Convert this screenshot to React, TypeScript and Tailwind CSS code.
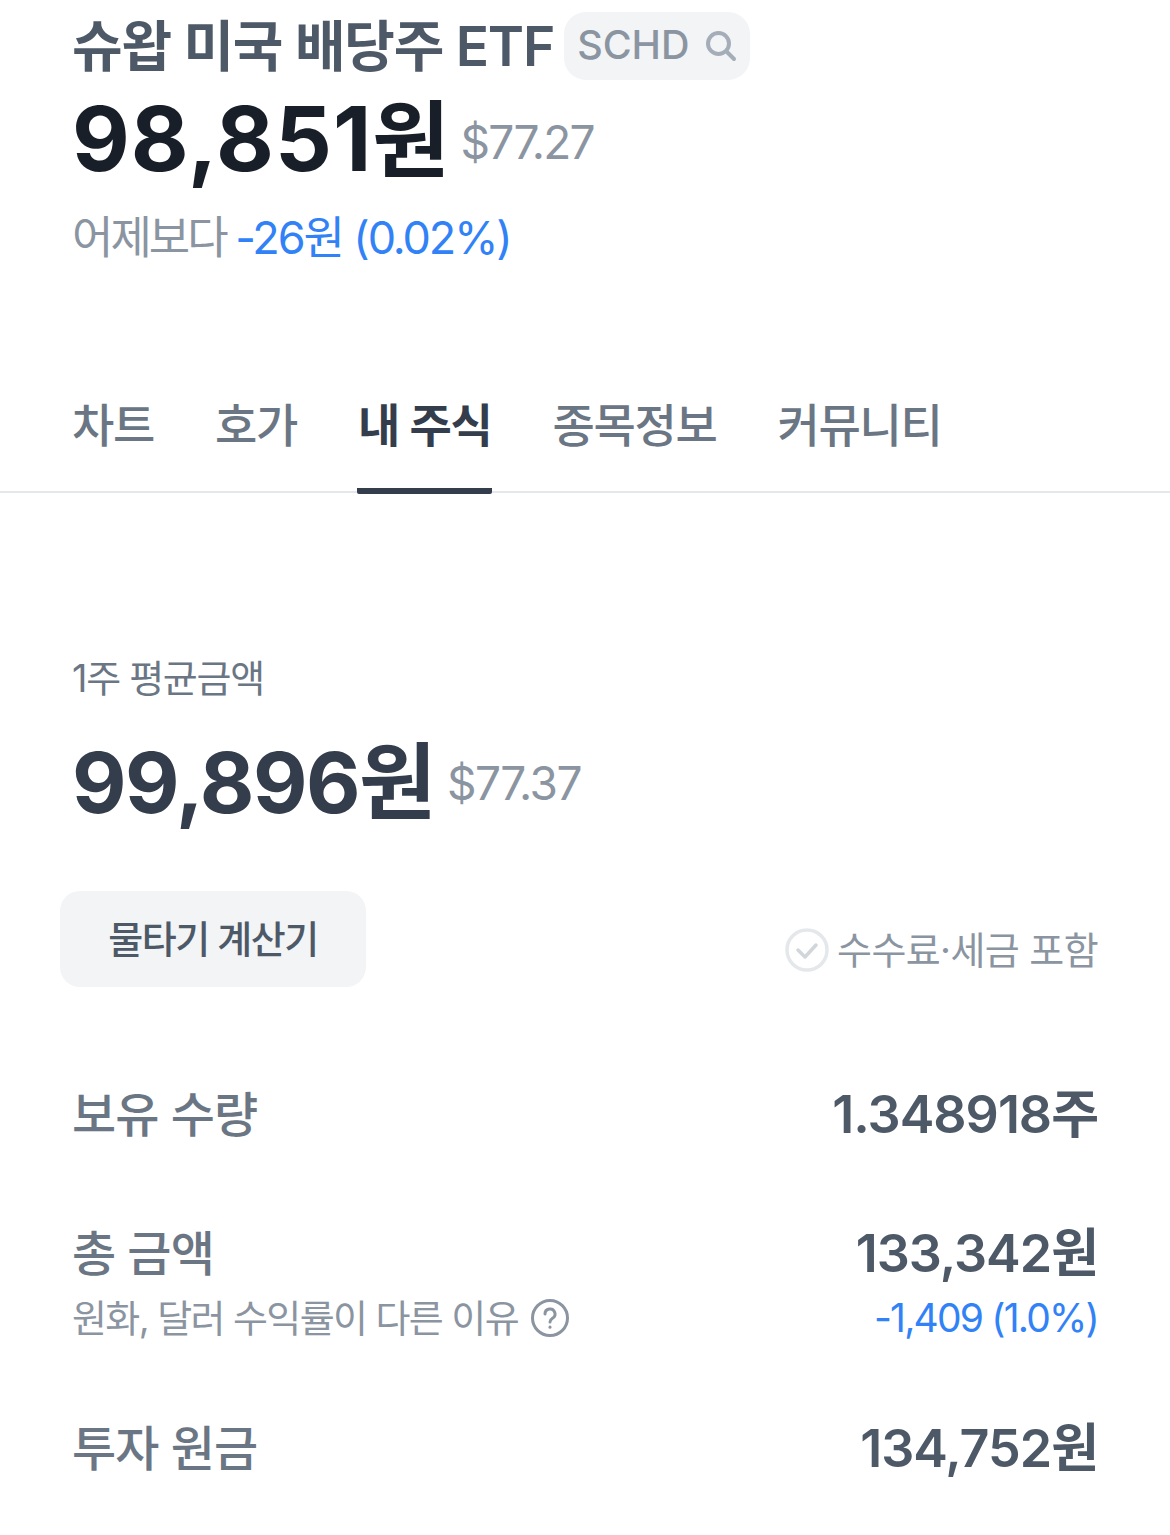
const font = "font-['Inter','Noto_Sans_CJK_KR',sans-serif]"

function Row({ label, value }: { label: string; value: string }) {
  return (
    <div className="flex items-center justify-between">
      <span className="text-[48px] leading-[60px] font-medium text-[#6b7684] tracking-[-0.8px]">{label}</span>
      <span className="text-[52px] leading-[60px] font-semibold text-[#4e5968] tracking-[-1px]">{value}</span>
    </div>
  )
}

export default function App() {
  return (
    <div className={`${font} w-[1170px] h-[1535px] bg-white overflow-hidden`}>
      {/* Header */}
      <div className="px-[72px] pt-[12px]">
        <div className="flex items-center gap-[10px] h-[68px]">
          <h1 className="text-[55px] font-semibold text-[#4e5968] tracking-[-1.2px] leading-[68px] whitespace-nowrap">슈왑 미국 배당주 ETF</h1>
          <div className="flex items-center gap-[13px] h-[68px] pl-[13px] pr-[11px] rounded-[22px] bg-[#f2f4f6]">
            <span className="text-[39.5px] font-medium text-[#8b95a1] leading-none">SCHD</span>
            <svg width="36" height="36" viewBox="0 0 36 36" fill="none" stroke="#a5aeb8" strokeWidth="4" strokeLinecap="round">
              <circle cx="15.5" cy="15.5" r="10.5" />
              <path d="M24 24l7 7" />
            </svg>
          </div>
        </div>
        <div className="flex items-center gap-[10px] mt-[8px] h-[104px]">
          <span className="text-[89px] leading-[104px] font-bold text-[#191f28] tracking-[1px]">98,851<span className="text-[84px]">원</span></span>
          <span className="pt-[4px] text-[46px] text-[#8b95a1] tracking-[-1.8px] leading-none">$77.27</span>
        </div>
        <p className="mt-[16px] text-[45px] leading-[60px] text-[#8b95a1] tracking-[-3px]">
          어제보다 <span className="text-[#3182f6] tracking-[-2.1px]">-26원 (0.02%)</span>
        </p>
      </div>

      {/* Tabs */}
      <div className="flex gap-[61px] mt-[128px] px-[72px] h-[97px] border-b-2 border-[#e5e8eb]">
        <span className="text-[46px] leading-[58px] font-medium text-[#6b7684] tracking-[-1.3px]">차트</span>
        <span className="text-[46px] leading-[58px] font-medium text-[#6b7684] tracking-[-1.3px]">호가</span>
        <span className="h-[98px] -mx-[1px] px-[1px] border-b-[6px] border-[#333d4b] rounded-b-[2px] text-[46px] leading-[58px] font-semibold text-[#333d4b] tracking-[-1.3px]">내 주식</span>
        <span className="text-[46px] leading-[58px] font-medium text-[#6b7684] tracking-[-1.3px]">종목정보</span>
        <span className="text-[46px] leading-[58px] font-medium text-[#6b7684] tracking-[-1.3px]">커뮤니티</span>
      </div>

      {/* Average price */}
      <div className="px-[72px] pt-[158px]">
        <p className="text-[38px] leading-[54px] text-[#6b7684] tracking-[-1.3px]">1주 평균금액</p>
        <div className="flex items-center gap-[12px] mt-[26px] h-[104px]">
          <span className="text-[84px] leading-[104px] font-bold text-[#333d4b] tracking-[-1.5px]">99,896원</span>
          <span className="text-[46px] text-[#8b95a1] tracking-[-1.5px] leading-none">$77.37</span>
        </div>
      </div>

      <div className="flex items-center justify-between pl-[60px] pr-[72px] mt-[56px]">
        <button className="w-[306px] h-[96px] rounded-[20px] bg-[#f2f4f6] text-[38px] font-medium text-[#4e5968] tracking-[-1.5px]">물타기 계산기</button>
        <div className="flex items-center gap-[8px] mt-[22px]">
          <svg width="44" height="44" viewBox="0 0 44 44" fill="none" strokeLinecap="round" strokeLinejoin="round">
            <circle cx="22" cy="22" r="20" stroke="#e5e8eb" strokeWidth="3.5" />
            <path d="M13 22l7 7 11-12" stroke="#d1d6db" strokeWidth="3.5" />
          </svg>
          <span className="text-[38px] leading-[54px] text-[#8b95a1] tracking-[-0.6px]">수수료·세금 포함</span>
        </div>
      </div>

      {/* Details */}
      <div className="px-[72px] mt-[98px]">
        <Row label="보유 수량" value="1.348918주" />
        <div className="mt-[79px]">
          <Row label="총 금액" value="133,342원" />
          <div className="flex items-center justify-between mt-[7px]">
            <span className="flex items-center gap-[12px] text-[38px] leading-[54px] text-[#8b95a1] tracking-[-1.6px]">
              원화, 달러 수익률이 다른 이유
              <svg width="40" height="40" viewBox="0 0 40 40" fill="none" stroke="#8b95a1" strokeWidth="3" strokeLinecap="round">
                <circle cx="20" cy="20" r="17.5" />
                <path d="M15 16a5 5 0 1 1 7.5 4.3c-1.6 1-2.5 1.8-2.5 3.7" />
                <path d="M20 29v.2" />
              </svg>
            </span>
            <span className="text-[39px] leading-[54px] text-[#3182f6] tracking-[-1.8px]">-1,409 (1.0%)</span>
          </div>
        </div>
        <div className="mt-[74px]">
          <Row label="투자 원금" value="134,752원" />
        </div>
      </div>
    </div>
  )
}
